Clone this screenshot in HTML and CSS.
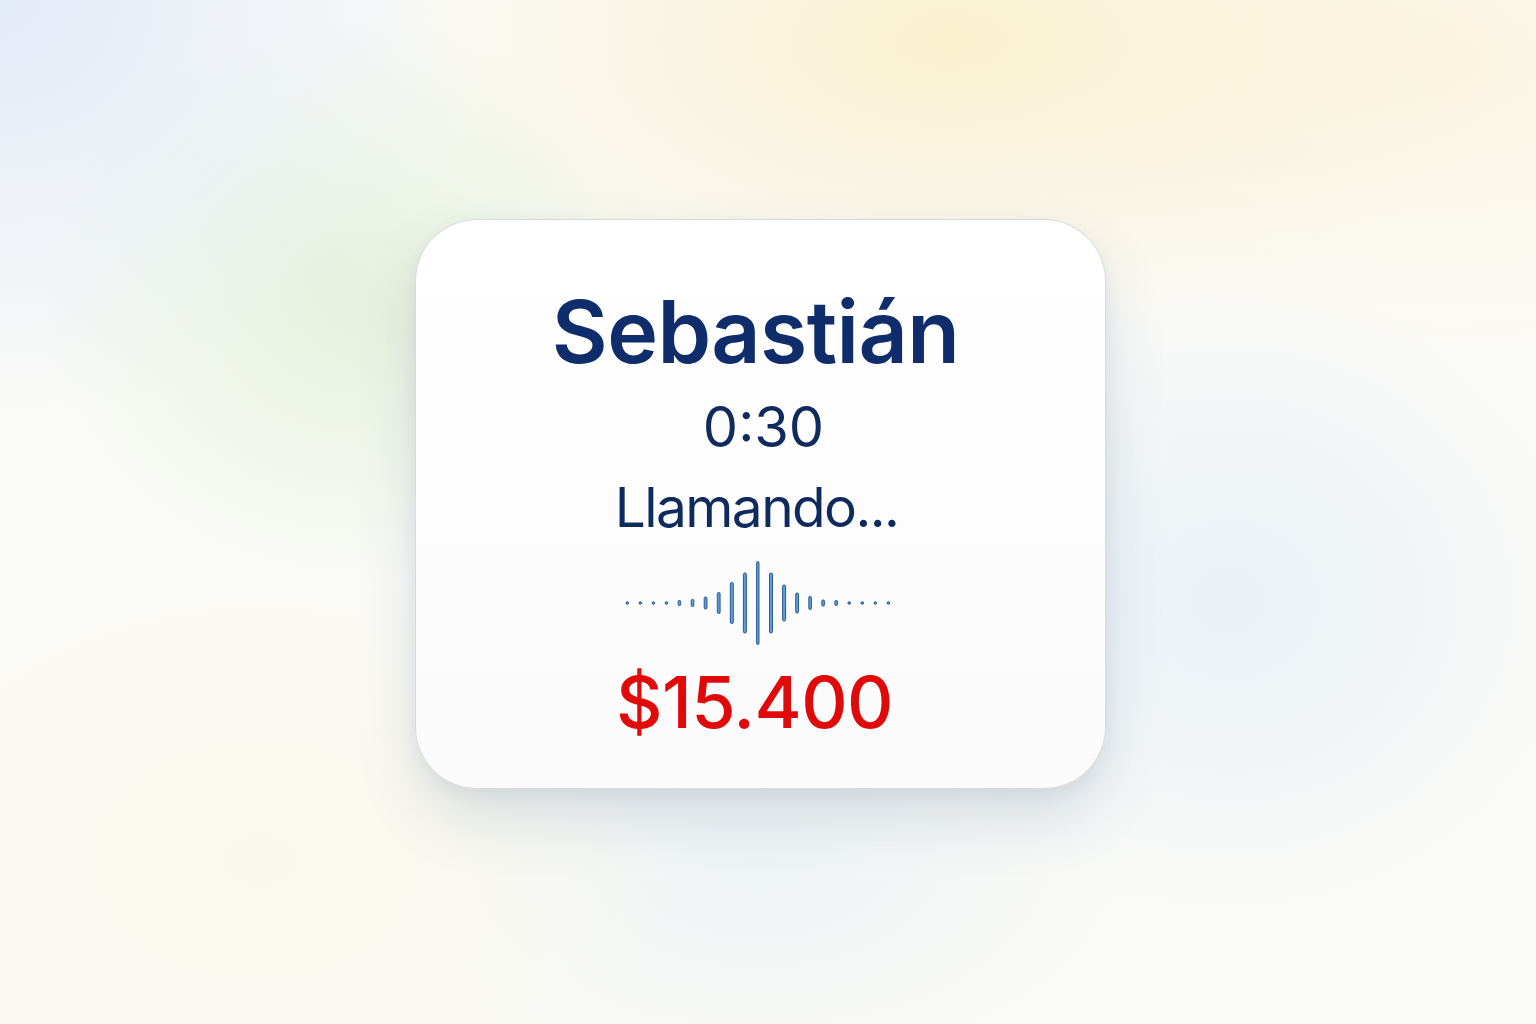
FILE: index.html
```html
<!DOCTYPE html>
<html lang="es">
<head>
<meta charset="utf-8">
<title>Llamando</title>
<link rel="stylesheet" href="styles.css">
</head>
<body>
<main class="stage">
  <section class="card">
    <h1 class="name">Sebastián</h1>
    <div class="timer">0:30</div>
    <div class="status">Llamando...</div>
    <svg class="wave" width="280" height="90" viewBox="0 0 280 90" aria-hidden="true">
      <g fill="#5d9fd6" stroke="#1c4e8c" stroke-width="0.9">
        <circle cx="6.3" cy="45" r="1.3"/>
        <circle cx="19.3" cy="45" r="1.3"/>
        <circle cx="32.4" cy="45" r="1.3"/>
        <circle cx="45.5" cy="45" r="1.3"/>
        <rect x="57.1" y="42.5" width="2.6" height="5" rx="1"/>
        <rect x="70.2" y="41.5" width="2.6" height="7" rx="1"/>
        <rect x="83.2" y="39" width="2.8" height="12" rx="1.2"/>
        <rect x="96.3" y="34.5" width="2.8" height="21" rx="1.2"/>
        <rect x="109.3" y="24.5" width="3" height="41" rx="1.4"/>
        <rect x="122.4" y="15" width="3" height="60" rx="1.4"/>
        <rect x="135.6" y="3.5" width="2.4" height="83" rx="1.2"/>
        <rect x="148.5" y="15" width="3" height="60" rx="1.4"/>
        <rect x="161.6" y="27" width="3" height="36" rx="1.4"/>
        <rect x="174.7" y="35" width="2.8" height="20" rx="1.2"/>
        <rect x="187.8" y="38.5" width="2.6" height="13" rx="1.1"/>
        <rect x="200.8" y="42" width="2.6" height="6" rx="1"/>
        <rect x="213.9" y="42.5" width="2.6" height="5" rx="1"/>
        <circle cx="228.2" cy="45" r="1.3"/>
        <circle cx="241.3" cy="45" r="1.3"/>
        <circle cx="254.3" cy="45" r="1.3"/>
        <circle cx="267.4" cy="45" r="1.3"/>
      </g>
    </svg>
    <div class="amount">$15.400</div>
  </section>
</main>
</body>
</html>
```

FILE: styles.css
```css
* { box-sizing: border-box; }
html, body { margin: 0; padding: 0; }
body {
  width: 1536px;
  height: 1024px;
  overflow: hidden;
  font-family: Inter, "Noto Sans", "Liberation Sans", sans-serif;
  background:
    radial-gradient(ellipse 480px 420px at 0px 0px, rgba(226,234,248,0.95), rgba(226,234,248,0) 100%),
    radial-gradient(ellipse 560px 300px at 950px 40px, rgba(250,240,205,0.95), rgba(250,240,205,0) 100%),
    radial-gradient(ellipse 480px 300px at 1450px 60px, rgba(252,245,222,0.9), rgba(252,245,222,0) 100%),
    radial-gradient(ellipse 320px 280px at 360px 300px, rgba(224,240,214,0.8), rgba(224,240,214,0) 100%),
    radial-gradient(ellipse 360px 320px at 1230px 600px, rgba(232,240,246,0.9), rgba(232,240,246,0) 100%),
    radial-gradient(ellipse 420px 300px at 260px 860px, rgba(250,248,234,0.85), rgba(250,248,234,0) 100%),
    radial-gradient(ellipse 380px 220px at 760px 860px, rgba(236,242,244,0.8), rgba(236,242,244,0) 100%),
    #fafaf7;
}
.stage {
  width: 1536px;
  height: 1024px;
  display: flex;
  justify-content: center;
  align-items: flex-start;
  padding-top: 219px;
}
.card {
  width: 691px;
  height: 570px;
  margin-left: -15px;
  border-radius: 62px;
  background: linear-gradient(180deg, #ffffff 0%, #fbfbfb 100%);
  border: 1px solid rgba(200, 205, 200, 0.7);
  box-shadow:
    0 30px 60px rgba(70, 95, 130, 0.16),
    0 6px 16px rgba(70, 95, 130, 0.08);
  display: flex;
  flex-direction: column;
  align-items: center;
  padding-top: 68px;
}
.name {
  margin: 0;
  font-size: 86px;
  line-height: 88px;
  font-weight: 600;
  color: #0f2d6b;
  letter-spacing: -0.6px;
  margin-left: -10px;
}
.timer {
  margin-top: 23px;
  font-size: 56px;
  line-height: 56px;
  font-weight: 400;
  color: #0f2a5c;
  margin-left: 6px;
}
.status {
  margin-top: 25px;
  font-size: 55px;
  line-height: 55px;
  font-weight: 400;
  color: #0f2a5c;
  letter-spacing: -1.6px;
  margin-left: -8px;
}
.wave {
  display: block;
  margin-top: 23px;
  margin-left: 0px;
}
.amount {
  margin-top: 18px;
  font-size: 72px;
  line-height: 72px;
  font-weight: 500;
  color: #e00a0a;
  letter-spacing: -0.6px;
  margin-left: -12px;
}
```
